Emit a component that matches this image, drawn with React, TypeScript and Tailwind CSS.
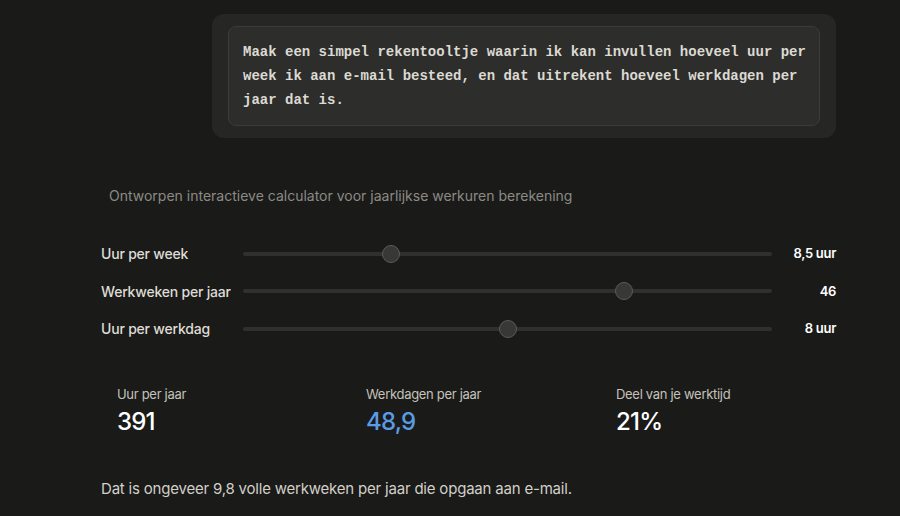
import React from "react";

const sans = { fontFamily: "Inter, 'Noto Sans', sans-serif" };

interface SliderRow {
  label: string;
  value: number;
  min: number;
  max: number;
  display: string;
}

const rows: SliderRow[] = [
  { label: "Uur per week", value: 8.5, min: 0.5, max: 30, display: "8,5 uur" },
  { label: "Werkweken per jaar", value: 46, min: 30, max: 52, display: "46" },
  { label: "Uur per werkdag", value: 8, min: 4, max: 12, display: "8 uur" },
];

const stats = [
  { label: "Uur per jaar", value: "391", accent: false },
  { label: "Werkdagen per jaar", value: "48,9", accent: true },
  { label: "Deel van je werktijd", value: "21%", accent: false },
];

function Slider({ row }: { row: SliderRow }) {
  const pct = ((row.value - row.min) / (row.max - row.min)) * 100;
  return (
    <div className="flex items-center gap-3 h-[37.5px]">
      <span className="min-w-[130px] text-[14px] font-medium text-[#dedcd4] tracking-[-0.2px]">{row.label}</span>
      <div className="relative flex-1 h-[18px] flex items-center">
        <div className="w-full h-[4px] rounded-full bg-[#30302e]" />
        <div
          className="absolute top-0 w-[18px] h-[18px] rounded-full bg-[#383836] border border-[#5a5a57]"
          style={{ left: `calc((100% - 18px) * ${pct / 100})` }}
        />
      </div>
      <span className="w-[52px] text-right text-[13px] font-semibold text-white tracking-[-0.3px]">{row.display}</span>
    </div>
  );
}

export default function App() {
  return (
    <div className="min-h-[516px] w-full bg-[#1a1a19] overflow-hidden" style={sans}>
      <div className="w-[735px] ml-[101px] pt-[14px]">
        {/* user prompt */}
        <div className="ml-[111px] rounded-[12px] bg-[#262624] px-[16px] py-[12px]">
          <div className="rounded-[8px] border border-[#3c3c3a] bg-[#2d2d2b] pl-[14px] pr-[11px] py-[13px]">
            <p
              className="text-[14px] leading-[24px] font-bold text-[#dcdad2]"
              style={{ fontFamily: "'Liberation Mono', 'DejaVu Sans Mono', monospace" }}
            >
              Maak een simpel rekentooltje waarin ik kan invullen hoeveel uur per week ik aan e-mail besteed, en dat uitrekent hoeveel werkdagen per jaar dat is.
            </p>
          </div>
        </div>

        {/* artifact description */}
        <p className="mt-[47px] ml-[8px] text-[14px] text-[#8c8a84]">
          Ontworpen interactieve calculator voor jaarlijkse werkuren berekening
        </p>

        {/* sliders */}
        <div className="mt-[29px] flex flex-col">
          {rows.map((r) => (
            <Slider key={r.label} row={r} />
          ))}
        </div>

        {/* results */}
        <div className="mt-[37px] pl-[16px] grid grid-cols-[249px_250px_1fr]">
          {stats.map((s) => (
            <div key={s.label} className="flex flex-col">
              <span className="text-[13px] text-[#c4c2ba] tracking-[-0.3px]">{s.label}</span>
              <span
                className={`mt-[3px] text-[24px] font-medium leading-[30px] tracking-[-0.8px] ${s.accent ? "text-[#5a9be6]" : "text-white"}`}
              >
                {s.value}
              </span>
            </div>
          ))}
        </div>

        <p className="mt-[41px] text-[15px] text-[#d2d0c8] tracking-[-0.2px]">
          Dat is ongeveer 9,8 volle werkweken per jaar die opgaan aan e-mail.
        </p>
      </div>
    </div>
  );
}
